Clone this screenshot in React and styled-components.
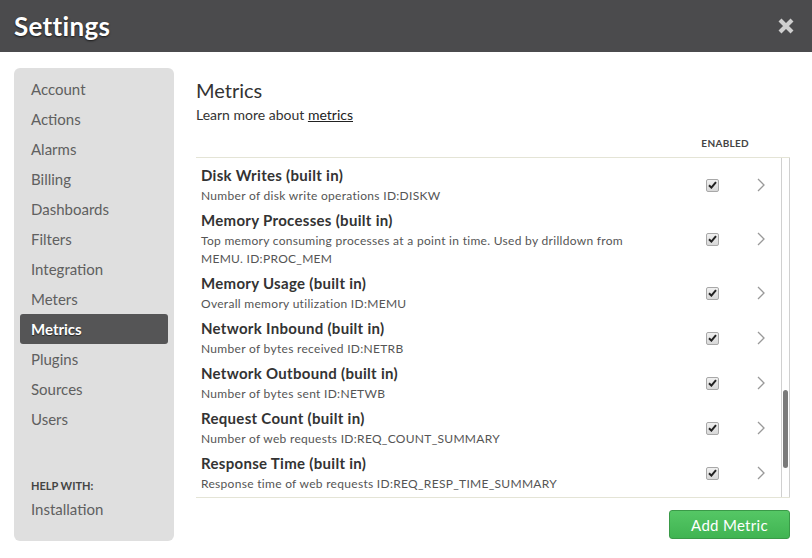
import React from 'react';
import styled, { createGlobalStyle } from 'styled-components';

const GlobalStyle = createGlobalStyle`
  html, body {
    margin: 0;
    padding: 0;
    background: #ffffff;
    font-family: Lato, "Open Sans", Arial, sans-serif;
  }
`;

const Page = styled.div`
  width: 812px;
  height: 558px;
  overflow: hidden;
  background: #fff;
`;

const TopBar = styled.header`
  height: 52px;
  background: #4b4b4d;
  display: flex;
  align-items: center;
  justify-content: space-between;
  padding: 0 16px 0 14px;
  box-sizing: border-box;
`;

const Title = styled.h1`
  margin: 0;
  font-size: 26px;
  font-weight: 700;
  color: #fff;
  text-shadow: 0 1px 2px rgba(0, 0, 0, 0.7);
  letter-spacing: 0.3px;
`;

const Close = styled.button`
  border: 0;
  background: none;
  padding: 0;
  width: 20px;
  height: 20px;
  display: flex;
  align-items: center;
  justify-content: center;
`;

const Body = styled.div`
  display: flex;
  gap: 22px;
  padding: 16px 22px 0 14px;
`;

const Sidebar = styled.nav`
  width: 160px;
  height: 473px;
  box-sizing: border-box;
  background: #dfdfdf;
  border-radius: 6px;
  padding: 6px 6px 17px;
  display: flex;
  flex-direction: column;
`;

const NavItem = styled.div`
  height: 30px;
  line-height: 30px;
  padding-left: 11px;
  border-radius: 3px;
  font-size: 15px;
  color: ${p => (p.$active ? '#fff' : '#606060')};
  background: ${p => (p.$active ? '#555556' : 'transparent')};
  font-weight: ${p => (p.$active ? 700 : 400)};
  text-shadow: ${p => (p.$active ? '0 1px 1px rgba(0,0,0,0.6)' : 'none')};
`;

const HelpBlock = styled.div`
  margin-top: auto;
`;

const HelpLabel = styled.div`
  padding-left: 11px;
  font-size: 11px;
  font-weight: 700;
  color: #444;
  line-height: 16px;
`;

const Main = styled.main`
  width: 594px;
  padding-top: 10px;
  display: flex;
  flex-direction: column;
`;

const Heading = styled.h2`
  margin: 0;
  font-size: 20px;
  font-weight: 400;
  color: #333;
  line-height: 24px;
`;

const Lead = styled.p`
  margin: 3px 0 0;
  font-size: 14px;
  color: #333;
  line-height: 20px;

  a {
    color: #222;
    text-decoration: underline;
  }
`;

const ColumnHead = styled.div`
  display: flex;
  justify-content: flex-end;
  padding-right: 41px;
  margin-top: 11px;
  font-size: 10px;
  font-weight: 700;
  color: #444;
  letter-spacing: 0.3px;
  line-height: 14px;
`;

const List = styled.div`
  margin-top: 7px;
  height: 341px;
  box-sizing: border-box;
  border-top: 1px solid #e4e4d6;
  border-bottom: 1px solid #e4e4d6;
  display: flex;
  overflow: hidden;
`;

const Rows = styled.div`
  flex: 1;
  padding-top: 7px;
`;

const Row = styled.div`
  display: flex;
  align-items: center;
  padding: 0 0 5px 5px;
`;

const RowText = styled.div`
  flex: 1;
`;

const RowTitle = styled.div`
  font-size: 15px;
  font-weight: 700;
  color: #333;
  line-height: 20px;
  letter-spacing: 0.3px;
`;

const RowDesc = styled.div`
  margin-top: 2px;
  font-size: 12px;
  color: #555;
  line-height: 18px;
  letter-spacing: 0.3px;
  max-width: 440px;
`;

const CheckCell = styled.div`
  width: 30px;
  display: flex;
  justify-content: center;
  margin-right: 24px;
`;

const Check = styled.span`
  width: 11px;
  height: 11px;
  border: 1px solid #a8a8a8;
  border-radius: 2px;
  background: linear-gradient(#f0f0f0, #d8d8d8);
  display: flex;
  align-items: center;
  justify-content: center;
`;

const ChevronCell = styled.div`
  width: 20px;
  margin-right: 10px;
  display: flex;
  justify-content: center;
`;

const Track = styled.div`
  width: 7px;
  border-left: 1px solid #d0d0d0;
  border-right: 1px solid #d0d0d0;
  display: flex;
  flex-direction: column;
`;

const Thumb = styled.div`
  margin: 232px auto 0;
  width: 5px;
  height: 78px;
  border-radius: 3px;
  background: #7a7a7a;
`;

const Footer = styled.div`
  display: flex;
  justify-content: flex-end;
  margin-top: 12px;
`;

const AddButton = styled.button`
  width: 121px;
  height: 29px;
  border: 1px solid #3a9a48;
  border-radius: 3px;
  background: linear-gradient(#55c765, #40b452);
  color: #fff;
  font-family: inherit;
  font-size: 15px;
  letter-spacing: 0.3px;
  padding: 0;
`;

const navItems = ['Account', 'Actions', 'Alarms', 'Billing', 'Dashboards', 'Filters', 'Integration', 'Meters', 'Metrics', 'Plugins', 'Sources', 'Users'];

const metrics = [
  { title: 'Disk Writes (built in)', desc: 'Number of disk write operations ID:DISKW' },
  { title: 'Memory Processes (built in)', desc: 'Top memory consuming processes at a point in time. Used by drilldown from MEMU. ID:PROC_MEM' },
  { title: 'Memory Usage (built in)', desc: 'Overall memory utilization ID:MEMU' },
  { title: 'Network Inbound (built in)', desc: 'Number of bytes received ID:NETRB' },
  { title: 'Network Outbound (built in)', desc: 'Number of bytes sent ID:NETWB' },
  { title: 'Request Count (built in)', desc: 'Number of web requests ID:REQ_COUNT_SUMMARY' },
  { title: 'Response Time (built in)', desc: 'Response time of web requests ID:REQ_RESP_TIME_SUMMARY' },
];

const CheckMark = () => (
  <svg width="9" height="8" viewBox="0 0 9 8">
    <path d="M1 4.2 L3.4 6.6 L8 1.2" fill="none" stroke="#222" strokeWidth="2" />
  </svg>
);

const Chevron = () => (
  <svg width="8" height="14" viewBox="0 0 8 14">
    <path d="M1 1 L7 7 L1 13" fill="none" stroke="#999" strokeWidth="1.3" />
  </svg>
);

const CloseIcon = () => (
  <svg width="18" height="18" viewBox="0 0 18 18">
    <path d="M3 3 L15 15 M15 3 L3 15" stroke="#cfcfcf" strokeWidth="4.2" strokeLinecap="butt" />
  </svg>
);

export default function App() {
  return (
    <Page>
      <GlobalStyle />
      <TopBar>
        <Title>Settings</Title>
        <Close aria-label="close"><CloseIcon /></Close>
      </TopBar>
      <Body>
        <Sidebar>
          {navItems.map(item => (
            <NavItem key={item} $active={item === 'Metrics'}>{item}</NavItem>
          ))}
          <HelpBlock>
            <HelpLabel>HELP WITH:</HelpLabel>
            <NavItem>Installation</NavItem>
          </HelpBlock>
        </Sidebar>
        <Main>
          <Heading>Metrics</Heading>
          <Lead>Learn more about <a href="#">metrics</a></Lead>
          <ColumnHead>ENABLED</ColumnHead>
          <List>
            <Rows>
              {metrics.map(m => (
                <Row key={m.title}>
                  <RowText>
                    <RowTitle>{m.title}</RowTitle>
                    <RowDesc>{m.desc}</RowDesc>
                  </RowText>
                  <CheckCell><Check><CheckMark /></Check></CheckCell>
                  <ChevronCell><Chevron /></ChevronCell>
                </Row>
              ))}
            </Rows>
            <Track><Thumb /></Track>
          </List>
          <Footer>
            <AddButton>Add Metric</AddButton>
          </Footer>
        </Main>
      </Body>
    </Page>
  );
}
